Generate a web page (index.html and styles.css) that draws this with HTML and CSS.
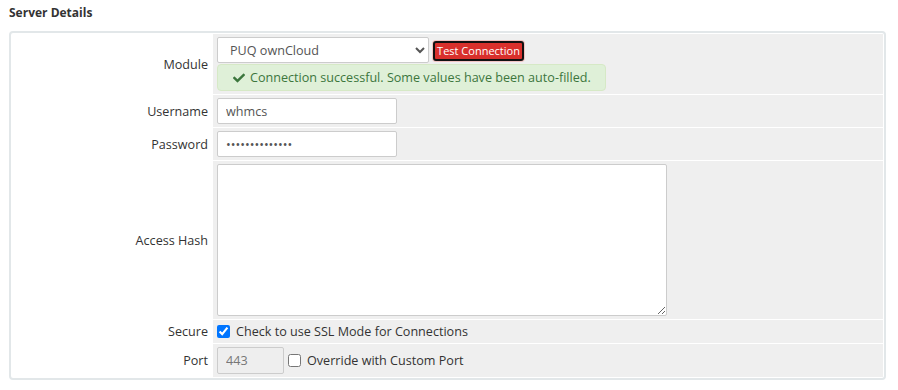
FILE: index.html
```html
<!DOCTYPE html>
<html>
<head>
<meta charset="utf-8">
<link rel="stylesheet" href="styles.css">
</head>
<body>
<div class="page">
  <h2 class="section-title">Server Details</h2>
  <table class="form">
    <tr>
      <td class="fieldlabel">Module</td>
      <td class="fieldarea">
        <div class="module-line">
          <select class="select-module">
            <option>PUQ ownCloud</option>
          </select>
          <button class="btn-test">Test Connection</button>
        </div>
        <div class="alert-success">
          <svg class="check" viewBox="0 0 512 512"><path d="M173.898 439.404l-166.4-166.4c-9.997-9.997-9.997-26.206 0-36.204l36.203-36.204c9.997-9.998 26.207-9.998 36.204 0L192 312.69 432.095 72.596c9.997-9.997 26.207-9.997 36.204 0l36.203 36.204c9.997 9.997 9.997 26.206 0 36.204l-294.4 294.401c-9.998 9.997-26.207 9.997-36.204-.001z"/></svg>
          <span>Connection successful. Some values have been auto-filled.</span>
        </div>
      </td>
    </tr>
    <tr>
      <td class="fieldlabel">Username</td>
      <td class="fieldarea"><input class="input-text" type="text" value="whmcs"></td>
    </tr>
    <tr>
      <td class="fieldlabel">Password</td>
      <td class="fieldarea"><input class="input-text" type="password" value="abcdefghijklmn"></td>
    </tr>
    <tr>
      <td class="fieldlabel">Access Hash</td>
      <td class="fieldarea"><textarea class="hash"></textarea></td>
    </tr>
    <tr>
      <td class="fieldlabel">Secure</td>
      <td class="fieldarea">
        <label class="check-label"><input type="checkbox" checked> Check to use SSL Mode for Connections</label>
      </td>
    </tr>
    <tr>
      <td class="fieldlabel">Port</td>
      <td class="fieldarea">
        <div class="port-line">
          <input class="input-port" type="text" value="443" disabled>
          <label class="check-label"><input type="checkbox"> Override with Custom Port</label>
        </div>
      </td>
    </tr>
  </table>
</div>
</body>
</html>
```

FILE: styles.css
```css
html, body {
  margin: 0;
  padding: 0;
  background: #fff;
}
body {
  font-family: "Open Sans", "Liberation Sans", sans-serif;
  font-size: 12.6px;
  color: #333;
}
.page {
  padding: 4px 9px 0 9px;
}
.section-title {
  margin: 0;
  font-size: 12px;
  font-weight: 700;
  line-height: 18px;
  color: #333;
  height: 27px;
}
.form {
  width: 877px;
  border: 2px solid #e2e7e9;
  border-radius: 4px;
  border-spacing: 1px;
  border-collapse: separate;
}
.form td {
  padding: 3px;
  vertical-align: middle;
}
.fieldlabel {
  width: 194px;
  text-align: right;
  padding-right: 4px !important;
  padding-left: 2px !important;
  background: #fff;
  color: #333;
}
.fieldarea {
  background: #efefef;
  padding-left: 4px !important;
}
.module-line {
  display: flex;
  align-items: center;
}
.select-module {
  width: 212px;
  height: 26px;
  border: 1px solid #ccc;
  border-radius: 2px;
  background: #fff;
  color: #555;
  font-family: "Open Sans", "Liberation Sans", sans-serif;
  font-size: 12.6px;
  padding: 0 8px;
  margin: 0;
}
.btn-test {
  margin-left: 4px;
  margin-top: 2px;
  height: 20px;
  width: 91px;
  padding: 0;
  white-space: nowrap;
  background: #d9302c;
  color: #fff;
  border: 2px solid #111;
  border-radius: 3px;
  font-family: "Open Sans", "Liberation Sans", sans-serif;
  font-size: 11px;
  line-height: 16px;
  box-shadow: 0 0 0 1px #f2c4c2;
}
.alert-success {
  margin-top: 1px;
  width: 372px;
  height: 25px;
  display: flex;
  align-items: center;
  background: #dff0d8;
  border: 1px solid #d6e9c6;
  border-radius: 4px;
  color: #3c763d;
  padding-left: 15px;
}
.check {
  width: 12px;
  height: 12px;
  fill: #3c763d;
  margin-right: 5px;
}
.input-text {
  box-sizing: border-box;
  width: 180px;
  height: 26px;
  border: 1px solid #ccc;
  border-radius: 2px;
  padding: 0 8px;
  font-family: "Open Sans", "Liberation Sans", sans-serif;
  font-size: 12.6px;
  color: #555;
  margin: 0;
  display: block;
}
.hash {
  box-sizing: border-box;
  display: block;
  width: 450px;
  height: 152px;
  margin: 0;
  border: 1px solid #ccc;
  border-radius: 2px;
  background: #fff;
  resize: both;
}
.check-label {
  display: flex;
  align-items: center;
  color: #333;
}
.check-label input {
  width: 13px;
  height: 13px;
  margin: 0 6px 0 0;
}
.port-line {
  display: flex;
  align-items: center;
}
.input-port {
  box-sizing: border-box;
  width: 67px;
  height: 27px;
  border: 1px solid #ccc;
  border-radius: 2px;
  background: #eee;
  padding: 0 8px;
  font-family: "Open Sans", "Liberation Sans", sans-serif;
  font-size: 12.6px;
  color: #777;
  margin: 0 4px 0 0;
}
```
